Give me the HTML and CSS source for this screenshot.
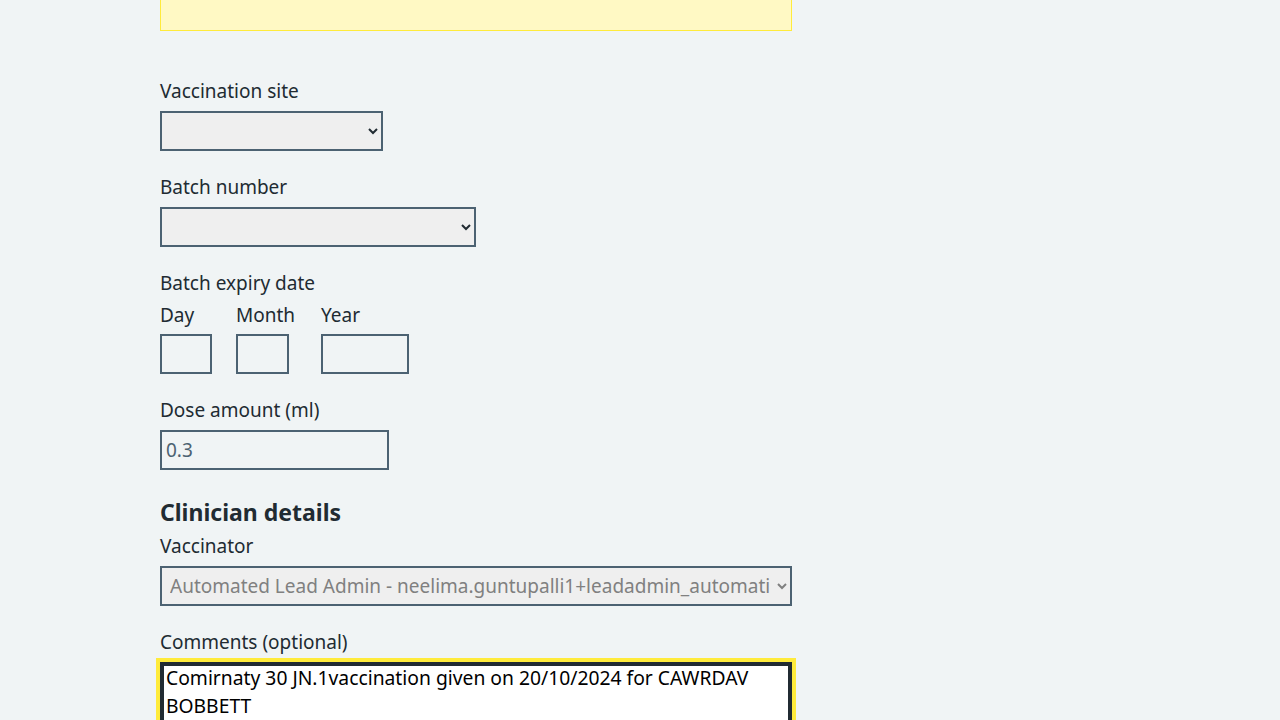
FILE: index.html
```html
<!DOCTYPE html>
<html lang="en">
<head>
<meta charset="utf-8">
<title>Record vaccination</title>
<link rel="stylesheet" href="styles.css">
</head>
<body>
<main class="page">
  <div class="form-col">
    <div class="warning-box"></div>

    <div class="form-group first">
      <label class="label" for="site">Vaccination site</label>
      <select class="select select-site" id="site"><option></option></select>
    </div>

    <div class="form-group">
      <label class="label" for="batch">Batch number</label>
      <select class="select select-batch" id="batch"><option></option></select>
    </div>

    <fieldset class="form-group fieldset">
      <legend class="label legend">Batch expiry date</legend>
      <div class="date-row">
        <div class="date-item">
          <label class="label date-label" for="d">Day</label>
          <input class="input input-day" id="d" type="text">
        </div>
        <div class="date-item date-item-month">
          <label class="label date-label" for="m">Month</label>
          <input class="input input-month" id="m" type="text">
        </div>
        <div class="date-item">
          <label class="label date-label" for="y">Year</label>
          <input class="input input-year" id="y" type="text">
        </div>
      </div>
    </fieldset>

    <div class="form-group">
      <label class="label" for="dose">Dose amount (ml)</label>
      <input class="input input-dose" id="dose" type="text" value="0.3" readonly>
    </div>

    <h2 class="heading">Clinician details</h2>

    <div class="form-group">
      <label class="label" for="vacc">Vaccinator</label>
      <select class="select select-vacc" id="vacc" disabled><option>Automated Lead Admin - neelima.guntupalli1+leadadmin_automation@nhs.net</option></select>
    </div>

    <div class="form-group">
      <label class="label" for="comments">Comments (optional)</label>
      <textarea class="textarea" id="comments" rows="4">Comirnaty 30 JN.1vaccination given on 20/10/2024 for CAWRDAV BOBBETT</textarea>
    </div>
  </div>
</main>
</body>
</html>
```

FILE: styles.css
```css
* { box-sizing: border-box; }

html, body {
  margin: 0;
  padding: 0;
  background: #f0f4f5;
  overflow: hidden;
}

body {
  font-family: "Noto Sans", "Open Sans", sans-serif;
  color: #212b32;
}

.page {
  width: 960px;
  margin: 0 auto;
}

.form-col {
  width: 632px;
  display: flex;
  flex-direction: column;
  align-items: flex-start;
}

.warning-box {
  width: 632px;
  height: 81px;
  margin-top: -50px;
  background: #fff9c4;
  border: 1px solid #ffeb3b;
}

.form-group {
  display: flex;
  flex-direction: column;
  align-items: flex-start;
  margin: 0 0 24px 0;
}

.form-group.first { margin-top: 48px; }

.label {
  display: block;
  font-size: 19px;
  line-height: 24px;
  margin-bottom: 8px;
}

.fieldset {
  border: 0;
  padding: 0;
  min-width: 0;
}

.legend {
  padding: 0;
  margin-bottom: 8px;
}

.date-row {
  display: flex;
  gap: 24px;
}

.date-item-month { min-width: 61px; }

.date-item {
  display: flex;
  flex-direction: column;
}

.date-label { margin-bottom: 7px; }

.select {
  height: 40px;
  border: 2px solid #4c6272;
  border-radius: 0;
  background-color: #efefef;
  font-family: inherit;
  font-size: 19px;
  color: #212b32;
  padding: 0 4px 0 4px;
}

.select-site { width: 223px; }
.select-batch { width: 316px; }
.select-vacc {
  width: 632px;
  color: #808080;
  opacity: 1;
}

.input {
  height: 40px;
  border: 2px solid #4c6272;
  border-radius: 0;
  background: transparent;
  font-family: inherit;
  font-size: 19px;
  padding: 4px;
  color: #4c6272;
}

.input-day { width: 52px; }
.input-month { width: 53px; }
.input-year { width: 88px; }
.input-dose { width: 229px; }

.heading {
  font-size: 23px;
  line-height: 32px;
  font-weight: 700;
  margin: 2px 0 6px 0;
}

.textarea {
  width: 632px;
  height: 140px;
  resize: none;
  font-family: inherit;
  font-size: 19.3px;
  line-height: 28px;
  color: #000;
  background: #fff;
  border: 2px solid #212b32;
  box-shadow: inset 0 0 0 2px #212b32;
  outline: 4px solid #ffeb3b;
  padding: 0 4px;
}
```
